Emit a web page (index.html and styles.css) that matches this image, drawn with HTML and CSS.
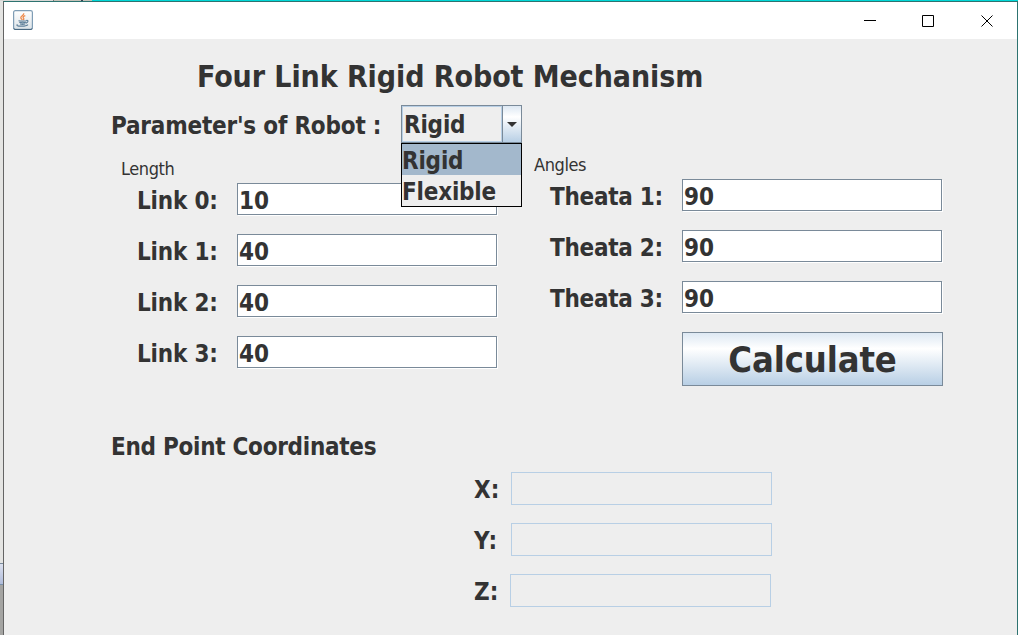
FILE: index.html
```html
<!DOCTYPE html>
<html lang="en">
<head>
<meta charset="utf-8">
<title>Four Link Rigid Robot Mechanism</title>
<link rel="stylesheet" href="styles.css">
</head>
<body>
<div class="desktop">
  <div class="backdrop-side"><div class="side-top"></div><div class="side-tab"></div><div class="side-bottom"></div></div>
  <main class="window">
    <header class="titlebar">
      <svg class="app-icon" width="20" height="20" viewBox="0 0 20 20">
        <defs><linearGradient id="cup" x1="0" y1="0" x2="0" y2="1"><stop offset="0" stop-color="#fff"/><stop offset="1" stop-color="#dce3e8"/></linearGradient></defs>
        <rect x=".6" y=".6" width="18.8" height="18.8" rx="1.8" fill="url(#cup)" stroke="#7f9db5" stroke-width="1.2"/>
        <path d="M1 18.2v.6q0 .7.8.7h16.4q.8 0 .8-.7v-.6" fill="none" stroke="#486881"/>
        <path d="M10.7 3.2c.7 2-3.4 2.800-2.900 4.600.2.900 1 1.400 1.500 2M12.300 5.700c-3.100 1-2.300 1.900-1.600 2.700.4.600 0 1.200-.5 1.600" fill="none" stroke="#ee8848" stroke-width="1.300"/>
        <path d="M5.500 10.700q4 .9 8 0M6.300 12.400q3.500.9 6.500 0M7 14q2.600.7 5.200 0M13.300 10.500c2.500-.6 2 1.900-.4 2.600M4.500 14.400c-3.300 2.100 8.500 2.500 10.500.2" fill="none" stroke="#5d7f99" stroke-width="1.100"/>
      </svg>
      <svg class="controls" width="131" height="13" viewBox="0 0 131 13" fill="none" stroke="#000">
        <path d="M0 6.500h12M58.500 1.500h11v11h-11zM117.500 1.500l11 11M128.500 1.500l-11 11"/>
      </svg>
    </header>
    <h1 class="title">Four Link Rigid Robot Mechanism</h1>
    <div class="params">
      <label class="params-label">Parameter's of Robot :</label>
      <div class="combo">
        <div class="combo-value">Rigid</div>
        <div class="combo-arrow"><svg width="10" height="5" viewBox="0 0 10 5"><path d="M0 0h10L5 5z" fill="#333"/></svg></div>
        <div class="menu"><div class="option selected">Rigid</div><div class="option">Flexible</div></div>
      </div>
    </div>
    <div class="columns">
      <section class="lengths">
        <div class="caption length-caption">Length</div>
        <div class="row"><label class="link">Link 0:</label><div class="field">10</div></div>
        <div class="row"><label class="link">Link 1:</label><div class="field">40</div></div>
        <div class="row"><label class="link">Link 2:</label><div class="field">40</div></div>
        <div class="row"><label class="link">Link 3:</label><div class="field">40</div></div>
      </section>
      <section class="angles">
        <div class="caption">Angles</div>
        <div class="row"><label class="theta">Theata 1:</label><div class="field">90</div></div>
        <div class="row"><label class="theta">Theata 2:</label><div class="field">90</div></div>
        <div class="row"><label class="theta">Theata 3:</label><div class="field">90</div></div>
        <button class="calculate">Calculate</button>
      </section>
    </div>
    <h2 class="subtitle">End Point Coordinates</h2>
    <section class="coords">
      <div class="coord"><label>X:</label><div class="output"></div></div>
      <div class="coord"><label class="coord-y">Y:</label><div class="output"></div></div>
      <div class="coord coord-z"><label>Z:</label><div class="output"></div></div>
    </section>
  </main>
</div>
</body>
</html>
```
FILE: styles.css
```css
* { box-sizing: border-box; }
body { margin: 0; overflow: hidden; font-family: "DejaVu Sans Condensed", "DejaVu Sans", sans-serif; font-stretch: condensed; font-size: 24px; font-weight: 700; color: #333; }
.desktop { display: flex; width: 1018px; height: 635px; padding-top: 1px; background: linear-gradient(90deg, #d8d8d6 0 53px, #777 53px 54px, #c5c2b8 54px 81px, #345 81px 83px, #c5c2b8 83px 92px, #00d8d8 92px); }
.backdrop-side { width: 3px; display: flex; flex-direction: column; }
.side-top { height: 562px; background: #e4e4e2; }
.side-tab { height: 22px; background: linear-gradient(#dbe0ee, #b1bddb); border-top: 1px solid #78899b; border-bottom: 1px solid #7890aa; }
.side-bottom { flex: 1; background: #a4a4a2; }
.window { width: 1015px; height: 634px; border: 1px solid #2d7370; border-left-color: #646464; border-bottom: 0; background: #eee; }
.titlebar { height: 37px; padding: 8px 22px 0 9px; background: #fff; display: flex; justify-content: space-between; }
.controls { margin-top: 4px; }
.title { margin: 20px 0 0 193px; height: 34px; font-size: 30px; line-height: 36px; letter-spacing: -.08px; white-space: nowrap; }
.params { display: flex; height: 38px; margin: 12px 0 0 107px; }
.params-label { width: 290px; line-height: 42px; letter-spacing: -.2px; white-space: nowrap; }
.combo { position: relative; display: flex; width: 121px; height: 38px; border: 1px solid #7a8a99; }
.combo-value { width: 100px; border: 1px solid #b8cfe5; padding-left: 1px; line-height: 36px; letter-spacing: -.2px; }
.combo-arrow { width: 19px; border-left: 1px solid #7a8a99; background: linear-gradient(#dde8f3, #fff 30%, #b8cfe5); display: flex; align-items: center; justify-content: center; }
.menu { position: absolute; left: -1px; top: 37px; width: 121px; height: 64px; border: 1px solid #000; background: #eee; z-index: 1; }
.option { height: 31px; line-height: 34px; letter-spacing: -.2px; }
.selected { background: #a3b8cc; }
.columns { display: flex; height: 244px; }
.lengths { width: 530px; padding: 14px 0 0 133px; }
.angles { width: 410px; padding-top: 10px; }
.caption { height: 22px; line-height: 24px; font-size: 18px; font-weight: 400; margin-bottom: 4px; letter-spacing: -.4px; }
.length-caption { margin-left: -16px; }
.row { display: flex; height: 33px; margin-bottom: 18px; line-height: 36px; white-space: nowrap; }
.link { width: 100px; letter-spacing: -.18px; }
.theta { width: 148px; padding-left: 16px; letter-spacing: -.28px; }
.field { width: 260px; height: 32px; padding-left: 1px; line-height: 34px; border: 1px solid #7a8a99; background: #fff; box-shadow: 1px 1px #fff; }
.calculate { display: block; margin: 0 0 0 148px; width: 261px; height: 54px; padding: 0; border: 1px solid #7a8a99; background: linear-gradient(#dde8f3, #fff 30%, #b8cfe5); color: #333; font: 700 36px/54px "DejaVu Sans Condensed", "DejaVu Sans", sans-serif; font-stretch: condensed; padding-top: 2px; line-height: 50px; letter-spacing: -.1px; }
.subtitle { margin: 42px 0 0 107px; height: 36px; font-size: 24px; line-height: 36px; letter-spacing: -.28px; }
.coords { margin: 7px 0 0 470px; }
.coord { display: flex; height: 33px; margin-bottom: 18px; line-height: 37px; }
.coord label { width: 37px; }
.coord .coord-y { letter-spacing: 1px; }
.coord-z label { width: 36px; }
.output { width: 261px; border: 1px solid #b8cfe5; }
```
